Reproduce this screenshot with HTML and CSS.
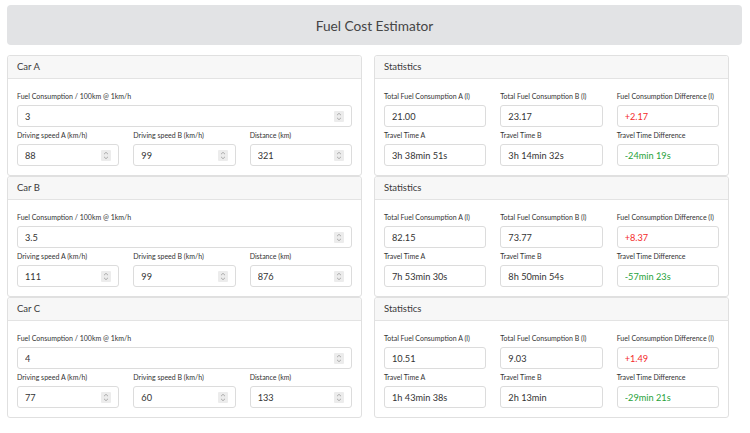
FILE: index.html
```html
<!DOCTYPE html>
<html lang="en">
<head>
<meta charset="utf-8">
<title>Fuel Cost Estimator</title>
<link rel="stylesheet" href="styles.css">
</head>
<body>
<header class="title-bar"><h1>Fuel Cost Estimator</h1></header>
<main class="grid">

  <section class="card">
    <div class="card-header">Car A</div>
    <div class="card-body">
      <div class="field"><label>Fuel Consumption / 100km @ 1km/h</label><div class="box"><input value="3"><span class="spin"><svg viewBox="0 0 10 11"><path d="M3 4.2 5 2.3 7 4.2M3 6.8 5 8.7 7 6.8"/></svg></span></div></div>
      <div class="row3">
        <div class="field"><label>Driving speed A (km/h)</label><div class="box"><input value="88"><span class="spin"><svg viewBox="0 0 10 11"><path d="M3 4.2 5 2.3 7 4.2M3 6.8 5 8.7 7 6.8"/></svg></span></div></div>
        <div class="field"><label>Driving speed B (km/h)</label><div class="box"><input value="99"><span class="spin"><svg viewBox="0 0 10 11"><path d="M3 4.2 5 2.3 7 4.2M3 6.8 5 8.7 7 6.8"/></svg></span></div></div>
        <div class="field"><label>Distance (km)</label><div class="box"><input value="321"><span class="spin"><svg viewBox="0 0 10 11"><path d="M3 4.2 5 2.3 7 4.2M3 6.8 5 8.7 7 6.8"/></svg></span></div></div>
      </div>
    </div>
  </section>

  <section class="card">
    <div class="card-header">Statistics</div>
    <div class="card-body">
      <div class="row3">
        <div class="field"><label>Total Fuel Consumption A (l)</label><div class="box"><input value="21.00" readonly></div></div>
        <div class="field"><label>Total Fuel Consumption B (l)</label><div class="box"><input value="23.17" readonly></div></div>
        <div class="field"><label>Fuel Consumption Difference (l)</label><div class="box"><input class="bad" value="+2.17" readonly></div></div>
      </div>
      <div class="row3">
        <div class="field"><label>Travel Time A</label><div class="box"><input value="3h 38min 51s" readonly></div></div>
        <div class="field"><label>Travel Time B</label><div class="box"><input value="3h 14min 32s" readonly></div></div>
        <div class="field"><label>Travel Time Difference</label><div class="box"><input class="good" value="-24min 19s" readonly></div></div>
      </div>
    </div>
  </section>

  <section class="card">
    <div class="card-header">Car B</div>
    <div class="card-body">
      <div class="field"><label>Fuel Consumption / 100km @ 1km/h</label><div class="box"><input value="3.5"><span class="spin"><svg viewBox="0 0 10 11"><path d="M3 4.2 5 2.3 7 4.2M3 6.8 5 8.7 7 6.8"/></svg></span></div></div>
      <div class="row3">
        <div class="field"><label>Driving speed A (km/h)</label><div class="box"><input value="111"><span class="spin"><svg viewBox="0 0 10 11"><path d="M3 4.2 5 2.3 7 4.2M3 6.8 5 8.7 7 6.8"/></svg></span></div></div>
        <div class="field"><label>Driving speed B (km/h)</label><div class="box"><input value="99"><span class="spin"><svg viewBox="0 0 10 11"><path d="M3 4.2 5 2.3 7 4.2M3 6.8 5 8.7 7 6.8"/></svg></span></div></div>
        <div class="field"><label>Distance (km)</label><div class="box"><input value="876"><span class="spin"><svg viewBox="0 0 10 11"><path d="M3 4.2 5 2.3 7 4.2M3 6.8 5 8.7 7 6.8"/></svg></span></div></div>
      </div>
    </div>
  </section>

  <section class="card">
    <div class="card-header">Statistics</div>
    <div class="card-body">
      <div class="row3">
        <div class="field"><label>Total Fuel Consumption A (l)</label><div class="box"><input value="82.15" readonly></div></div>
        <div class="field"><label>Total Fuel Consumption B (l)</label><div class="box"><input value="73.77" readonly></div></div>
        <div class="field"><label>Fuel Consumption Difference (l)</label><div class="box"><input class="bad" value="+8.37" readonly></div></div>
      </div>
      <div class="row3">
        <div class="field"><label>Travel Time A</label><div class="box"><input value="7h 53min 30s" readonly></div></div>
        <div class="field"><label>Travel Time B</label><div class="box"><input value="8h 50min 54s" readonly></div></div>
        <div class="field"><label>Travel Time Difference</label><div class="box"><input class="good" value="-57min 23s" readonly></div></div>
      </div>
    </div>
  </section>

  <section class="card">
    <div class="card-header">Car C</div>
    <div class="card-body">
      <div class="field"><label>Fuel Consumption / 100km @ 1km/h</label><div class="box"><input value="4"><span class="spin"><svg viewBox="0 0 10 11"><path d="M3 4.2 5 2.3 7 4.2M3 6.8 5 8.7 7 6.8"/></svg></span></div></div>
      <div class="row3">
        <div class="field"><label>Driving speed A (km/h)</label><div class="box"><input value="77"><span class="spin"><svg viewBox="0 0 10 11"><path d="M3 4.2 5 2.3 7 4.2M3 6.8 5 8.7 7 6.8"/></svg></span></div></div>
        <div class="field"><label>Driving speed B (km/h)</label><div class="box"><input value="60"><span class="spin"><svg viewBox="0 0 10 11"><path d="M3 4.2 5 2.3 7 4.2M3 6.8 5 8.7 7 6.8"/></svg></span></div></div>
        <div class="field"><label>Distance (km)</label><div class="box"><input value="133"><span class="spin"><svg viewBox="0 0 10 11"><path d="M3 4.2 5 2.3 7 4.2M3 6.8 5 8.7 7 6.8"/></svg></span></div></div>
      </div>
    </div>
  </section>

  <section class="card">
    <div class="card-header">Statistics</div>
    <div class="card-body">
      <div class="row3">
        <div class="field"><label>Total Fuel Consumption A (l)</label><div class="box"><input value="10.51" readonly></div></div>
        <div class="field"><label>Total Fuel Consumption B (l)</label><div class="box"><input value="9.03" readonly></div></div>
        <div class="field"><label>Fuel Consumption Difference (l)</label><div class="box"><input class="bad" value="+1.49" readonly></div></div>
      </div>
      <div class="row3">
        <div class="field"><label>Travel Time A</label><div class="box"><input value="1h 43min 38s" readonly></div></div>
        <div class="field"><label>Travel Time B</label><div class="box"><input value="2h 13min" readonly></div></div>
        <div class="field"><label>Travel Time Difference</label><div class="box"><input class="good" value="-29min 21s" readonly></div></div>
      </div>
    </div>
  </section>

</main>
</body>
</html>
```
FILE: styles.css
```css
* { box-sizing: border-box; }

html, body { background: #fff; }

body {
  margin: 0;
  padding: 5px 8px 0 7px;
  font-family: Lato, "Open Sans", sans-serif;
  color: #333;
}

.title-bar {
  height: 40px;
  background: #e2e3e5;
  border-radius: 4px;
  display: flex;
  align-items: center;
  justify-content: center;
}

.title-bar h1 {
  margin: 0;
  font-size: 13.7px;
  font-weight: 400;
  color: #454545;
}

.grid {
  margin-top: 10px;
  display: grid;
  grid-template-columns: 355px 355px;
  column-gap: 12px;
}

.card {
  border: 1px solid #e0e0e0;
  border-radius: 3px;
  background: #fff;
  min-width: 0;
}

.card-header {
  height: 23px;
  line-height: 22px;
  padding: 0 9px;
  font-size: 9.5px;
  color: #3a3a3a;
  background: #f7f7f7;
  border-bottom: 1px solid #e3e3e3;
  border-radius: 3px 3px 0 0;
}

.card-body {
  padding: 12px 9px 9px;
  display: flex;
  flex-direction: column;
  gap: 3px;
}

.row3 {
  display: grid;
  grid-template-columns: minmax(0, 1fr) minmax(0, 1fr) minmax(0, 1fr);
  column-gap: 14px;
}

.field { min-width: 0; }

.field label {
  display: block;
  font-size: 7px;
  line-height: 10px;
  margin-bottom: 4px;
  color: #333;
  white-space: nowrap;
}

.box {
  height: 22px;
  border: 1px solid #dcdcdc;
  border-radius: 3px;
  display: flex;
  align-items: center;
  padding: 0 7px 0 7px;
  background: #fff;
}

.box input {
  flex: 1;
  width: 0;
  min-width: 0;
  border: 0;
  outline: 0;
  padding: 0;
  margin: 0;
  background: transparent;
  font-family: inherit;
  font-size: 9.2px;
  color: #333;
}

.box input.bad { color: #f42a2a; }
.box input.good { color: #27a23a; }

.spin {
  width: 10px;
  height: 11px;
  background: #ececec;
  border-radius: 1px;
  display: flex;
}

.spin svg {
  width: 10px;
  height: 11px;
  fill: none;
  stroke: #9a9a9a;
  stroke-width: 0.8;
}
```
